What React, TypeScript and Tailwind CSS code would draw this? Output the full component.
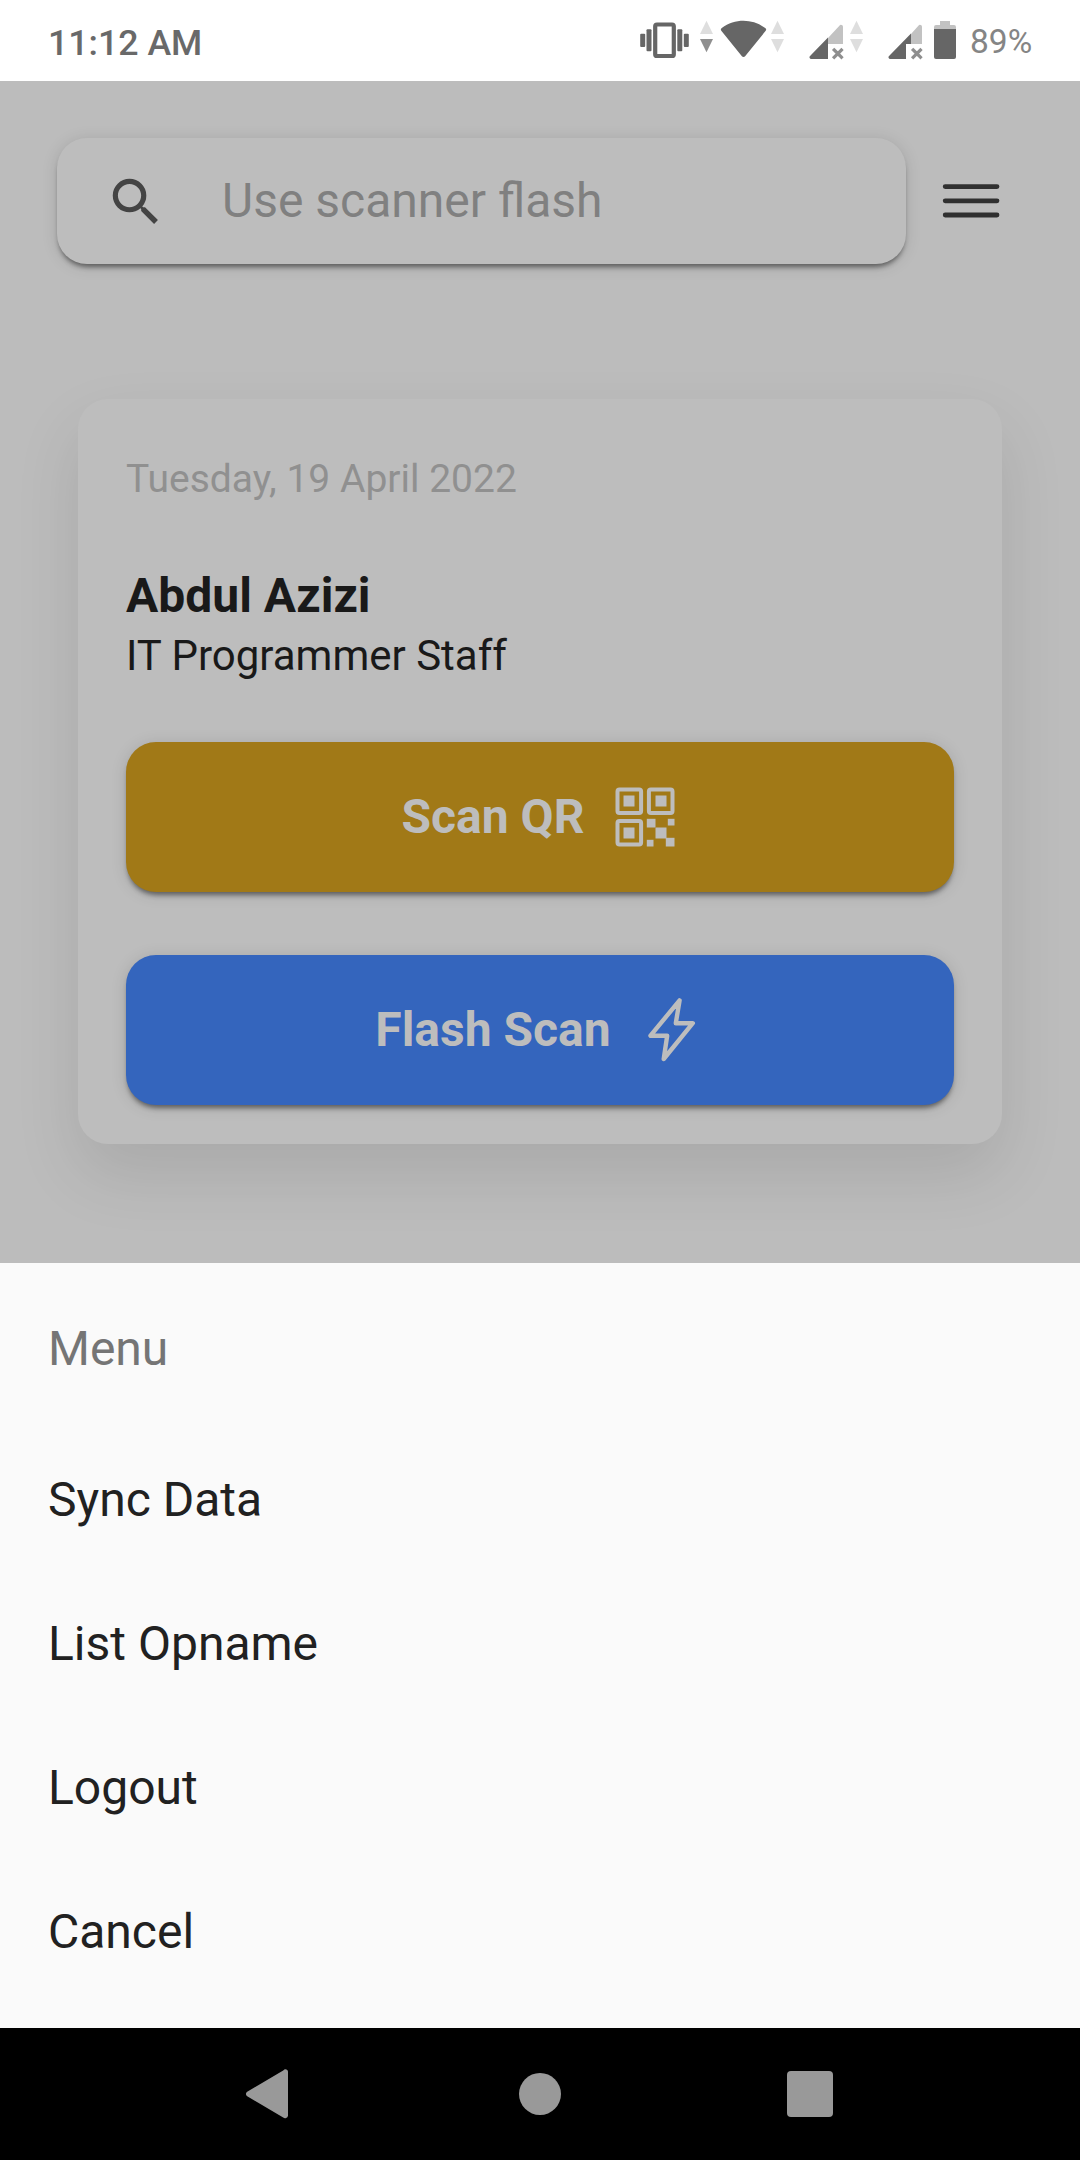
import React from 'react';

const menuItems = ['Sync Data', 'List Opname', 'Logout', 'Cancel'];

function TrafficArrows({ down = '#dedede' }: { down?: string }) {
  return (
    <svg width="21" height="81" viewBox="0 0 21 81">
      <path d="M10.5 20.8 17 34H4z" fill="#dedede" />
      <path d="M10.5 52.3 17 39H4z" fill={down} />
    </svg>
  );
}

function Signal({ level, cut }: { level: number; cut: number }) {
  return (
    <svg width="45" height="81" viewBox="0 0 45 81">
      <path d={`M${level} ${60 - level}V44H37V27.2a2 2 0 0 0-3.6-1.5z`} fill="#c2c2c2" />
      <path d={`M3.8 56.2 ${level} ${59.4 - level}V44H${cut}V59H4.8a1.8 1.8 0 0 1-1-2.8z`} fill="#666" />
      <path d="m28.200 50 7.200 7.200m0-7.200-7.200 7.200" stroke="#8e8e8e" strokeWidth="3.2" strokeLinecap="square" />
    </svg>
  );
}

function StatusBar() {
  return (
    <header className="flex h-[81px] shrink-0 bg-white">
      <span className="flex-1 pl-[48px] text-[35.700px] leading-[86px] font-medium text-[#696969]">11:12 AM</span>
      <svg width="60" height="81" viewBox="636 0 60 81" fill="#666">
        <rect x="655.200" y="24.5" width="18.6" height="31.5" rx="1.8" fill="none" stroke="#666" strokeWidth="4.2" />
        <rect x="646.5" y="29.3" width="5" height="22" rx="1" />
        <rect x="640.2" y="33.7" width="5" height="13.3" rx="1" />
        <rect x="677.3" y="29.3" width="5" height="22" rx="1" />
        <rect x="683.8" y="33.7" width="5" height="13.3" rx="1" />
      </svg>
      <TrafficArrows down="#8f8f8f" />
      <svg width="50" height="81" viewBox="717 0 50 81">
        <path d="M721.3 30.8a2 2 0 0 1 .5-2.8c13-9.6 30.400-9.6 43.400 0a2 2 0 0 1 .5 2.800l-20.600 25.400a2 2 0 0 1-3.200 0z" fill="#666" />
      </svg>
      <TrafficArrows />
      <div className="pl-[18px]"><Signal level={22} cut={22} /></div>
      <div className="-ml-[5px]"><TrafficArrows /></div>
      <div className="pl-[18px]"><Signal level={26} cut={21} /></div>
      <svg width="28" height="81" viewBox="930 0 28 81">
        <path d="M934 29v-2a2 2 0 0 1 2-2h4v-4h10v4h4a2 2 0 0 1 2 2v2z" fill="#c2c2c2" />
        <path d="M934 29h22v28a2 2 0 0 1-2 2h-18a2 2 0 0 1-2-2z" fill="#666" />
      </svg>
      <span className="w-[122px] pl-[12px] text-[33.500px] leading-[83px] text-[#858585]">89%</span>
    </header>
  );
}

function QrIcon() {
  return (
    <svg width="72" height="72" viewBox="608.500 780.500 72 72" fill="#bdbdbd">
      <g fill="none" stroke="#bdbdbd" strokeWidth="4">
        <rect x="617" y="789" width="23.600" height="23.600" rx="2" />
        <rect x="648.400" y="789" width="23.600" height="23.600" rx="2" />
        <rect x="617" y="820.400" width="23.600" height="23.600" rx="2" />
      </g>
      <rect x="623" y="795" width="11" height="11" />
      <rect x="655" y="795" width="11" height="11" />
      <rect x="623" y="827" width="11" height="11" />
      <rect x="646.300" y="818.300" width="8.700" height="8.700" />
      <rect x="655" y="827" width="11" height="11" />
      <rect x="667.300" y="818.300" width="6.700" height="6.700" />
      <rect x="646.300" y="839.300" width="6.700" height="6.700" />
      <rect x="665.300" y="837.300" width="8.700" height="8.700" />
    </svg>
  );
}

function BoltIcon() {
  return (
    <svg width="72" height="72" viewBox="636 994 72 72" fill="none" stroke="#bdbdbd" strokeWidth="4.400" strokeLinejoin="round">
      <path d="M679.600 1000.300 650.500 1035.700H667.200L663.700 1059 692.800 1023.200H675.800Z" />
    </svg>
  );
}

const raised = 'shadow-[0_5px_5px_-2px_rgba(0,0,0,0.46),0_2px_16px_rgba(0,0,0,0.13)]';

export default function App() {
  return (
    <div className="flex h-[2160px] w-[1080px] flex-col overflow-hidden font-['Roboto',sans-serif]">
      <StatusBar />

      <main className="h-[1182px] shrink-0 overflow-hidden bg-[#bcbcbc] pt-[57px]">
        <div className="flex items-center pl-[57px]">
          <div className={`flex h-[126px] w-[849px] items-center rounded-[30px] bg-[#bdbdbd] pl-[48px] ${raised}`}>
            <svg className="mt-px" width="62" height="62" viewBox="0 0 24 24" fill="#444">
              <path d="M15.500 14h-.79l-.28-.27A6.471 6.471 0 0 0 16 9.500 6.500 6.500 0 1 0 9.500 16c1.610 0 3.090-.59 4.230-1.570l.27.28v.79l5 4.990L20.490 19l-4.990-5zm-6 0C7.010 14 5 11.990 5 9.500S7.010 5 9.500 5 14 7.010 14 9.500 11.990 14 9.500 14z" />
            </svg>
            <span className="pl-[55px] text-[48px] leading-[58px] text-[#808080]">Use scanner flash</span>
          </div>
          <svg className="ml-[35px]" width="60" height="60" viewBox="941 171 60 60" stroke="#303030" strokeWidth="4.800" strokeLinecap="round">
            <path d="M945.200 186.600h51.800M945.200 200.800h51.800M945.200 215h51.800" />
          </svg>
        </div>

        <section className="mx-[78px] mt-[135px] flex h-[745px] flex-col rounded-[30px] bg-[#bdbdbd] px-[48px] shadow-[0_30px_66px_rgba(0,0,0,0.1)]">
          <p className="mt-[56px] text-[39px] leading-[48px] text-[#909090]">Tuesday, 19 April 2022</p>
          <h1 className="mt-[65px] text-[48px] leading-[56px] font-bold text-[#191919]">Abdul Azizi</h1>
          <p className="mt-[7px] text-[42px] leading-[50px] text-[#191919]">IT Programmer Staff</p>
          <button className={`mt-[61px] flex h-[150px] shrink-0 items-center justify-center gap-[25px] rounded-[30px] bg-[#a17917] pl-[3px] text-[48px] font-bold text-[#bdbdbd] ${raised}`}>
            Scan QR
            <QrIcon />
          </button>
          <button className={`mt-[63px] flex h-[150px] shrink-0 items-center justify-center gap-[25px] rounded-[30px] bg-[#3465bd] pl-[3px] text-[48px] font-bold text-[#bdbdbd] ${raised}`}>
            Flash Scan
            <BoltIcon />
          </button>
        </section>
      </main>

      <section className="h-[765px] shrink-0 bg-[#fafafa] px-[48px] pt-[57px]">
        <h2 className="h-[108px] text-[48px] leading-[57px] text-[#757575]">Menu</h2>
        <ul>
          {menuItems.map((item) => (
            <li key={item} className="h-[144px] text-[48px] leading-[144px] text-[#212121]">{item}</li>
          ))}
        </ul>
      </section>

      <nav className="grid h-[132px] shrink-0 grid-cols-3 place-items-center bg-black px-[135px]">
        <svg width="54" height="54" viewBox="0 0 54 54" fill="#999">
          <path d="M4.200 24.700 40.200 3.500a3 3 0 0 1 4.300-.2 3 3 0 0 1 .5 2v43.400a3 3 0 0 1-4.800 1.800L4.200 29.300a2.700 2.700 0 0 1 0-4.600z" />
        </svg>
        <div className="size-[42px] rounded-full bg-[#999]" />
        <div className="h-[46px] w-[46px] rounded-[4px] bg-[#999]" />
      </nav>
    </div>
  );
}
